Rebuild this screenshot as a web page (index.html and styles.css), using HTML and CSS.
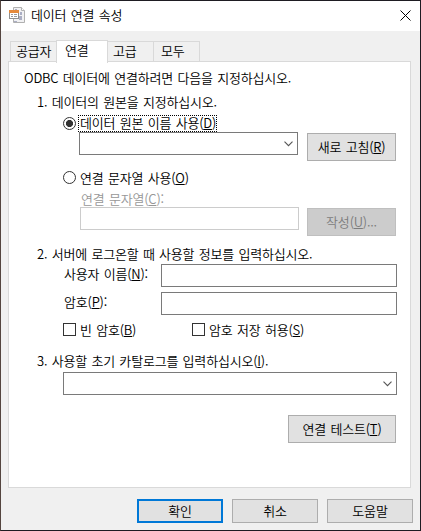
FILE: index.html
```html
<!DOCTYPE html>
<html lang="ko">
<head>
    <meta charset="UTF-8">
    <meta name="viewport" content="width=device-width, initial-scale=1.0">
    <title>데이터 연결 속성</title>
    <link rel="stylesheet" href="styles.css">
</head>
<body>
<div class="window">
    <div class="titlebar">
        <svg class="app-icon" width="17" height="17" viewBox="0 0 17 17">
            <path d="M4.5 .5h8l3 3v12h-11z" fill="#f1f1f3" stroke="#b0b0b0"/>
            <path d="M12.5 .5v3h3" fill="#fff" stroke="#b0b0b0"/>
            <path d="M6 2h2v2h-2zM9 3h1v1h-1zM11 5h2v3h-2zM10 9h3v4h-3zM5 14h3v1h-3z" fill="#aaaec4"/>
            <rect x=".5" y="3.5" width="9" height="8" fill="#fff" stroke="#8f8f8f"/>
            <rect x="0" y="3" width="10" height="3" fill="#e58a3c"/>
            <path d="M2 7.5h2M5 7.5h3M2 9.5h2M5 9.5h3" stroke="#9a9aa0"/>
        </svg>
        <span class="title">데이터 연결 속성</span>
        <svg class="close" width="11" height="11" viewBox="0 0 11 11">
            <path d="M.5 .5l10 10M10.5 .5l-10 10" stroke="#000" fill="none"/>
        </svg>
    </div>

    <div class="tabs">
        <div class="tab first">공급자</div>
        <div class="tab active">연결</div>
        <div class="tab">고급</div>
        <div class="tab last">모두</div>
    </div>

    <div class="panel">
        <div class="line intro">ODBC 데이터에 연결하려면 다음을 지정하십시오.</div>
        <div class="line step">1. 데이터의 원본을 지정하십시오.</div>

        <div class="source">
            <div class="source-left">
                <label class="option"><span class="radio checked"></span><span class="focus">데이터 원본 이름 사용(<u>D</u>)</span></label>
                <div class="box combo">
                    <svg class="arrow" width="9" height="6" viewBox="0 0 9 6"><path d="M.5 .7l4 4 4-4" fill="none" stroke="#555" stroke-width="1.1"/></svg>
                </div>
            </div>
            <button class="btn">새로 고침(<u>R</u>)</button>
        </div>

        <label class="option second"><span class="radio"></span><span class="text">연결 문자열 사용(<u>O</u>)</span></label>
        <div class="source conn">
            <div class="source-left">
                <div class="conn-label">연결 문자열(<u>C</u>):</div>
                <div class="box disabled"></div>
            </div>
            <button class="btn" disabled>작성(<u>U</u>)...</button>
        </div>

        <div class="line step two">2. 서버에 로그온할 때 사용할 정보를 입력하십시오.</div>
        <div class="field">
            <label>사용자 이름(<u>N</u>):</label>
            <div class="box"></div>
        </div>
        <div class="field password">
            <label>암호(<u>P</u>):</label>
            <div class="box"></div>
        </div>
        <div class="checks">
            <label><span class="checkbox"></span>빈 암호(<u>B</u>)</label>
            <label><span class="checkbox"></span>암호 저장 허용(<u>S</u>)</label>
        </div>

        <div class="line step three">3. 사용할 초기 카탈로그를 입력하십시오(<u>I</u>).</div>
        <div class="box combo catalog">
            <svg class="arrow" width="9" height="6" viewBox="0 0 9 6"><path d="M.5 .7l4 4 4-4" fill="none" stroke="#555" stroke-width="1.1"/></svg>
        </div>
        <button class="btn test">연결 테스트(<u>T</u>)</button>
    </div>

    <div class="footer">
        <button class="btn default">확인</button>
        <button class="btn">취소</button>
        <button class="btn">도움말</button>
    </div>
</div>
</body>
</html>
```

FILE: styles.css
```css
* {
    box-sizing: border-box;
}
body {
    margin: 0;
    font-family: "Noto Sans CJK KR", sans-serif;
    font-size: 13px;
    font-weight: 350;
    line-height: 18px;
    letter-spacing: -0.2px;
    word-spacing: 1px;
    color: #000;
    overflow: hidden;
}
.window {
    width: 421px;
    height: 531px;
    background: #f0f0f0;
    border: 1px solid #1e1c22;
    border-left-color: #54453f;
    white-space: nowrap;
}
u {
    text-underline-offset: 1px;
    text-decoration-thickness: 1px;
}

/* title bar */
.titlebar {
    display: flex;
    align-items: center;
    height: 30px;
    padding: 0 9px 2px 8px;
    background: #fff;
}
.title {
    margin-left: 5px;
    flex: 1;
}

/* tabs */
.tabs {
    display: flex;
    align-items: flex-end;
    height: 31px;
    padding-left: 9px;
    position: relative;
}
.tab {
    width: 46px;
    height: 21px;
    border: 1px solid #d9d9d9;
    border-left: none;
    padding-left: 5px;
    line-height: 18px;
}
.tab.first {
    border-left: 1px solid #d9d9d9;
    border-right: none;
}
.tab.last {
    padding-left: 7px;
}
.tab.active {
    width: 52px;
    height: 23px;
    margin-bottom: -1px;
    padding-left: 8px;
    line-height: 17px;
    background: #fff;
    border-left: 1px solid #d9d9d9;
    border-bottom: none;
}

.panel {
    width: 403px;
    height: 427px;
    margin-left: 7px;
    padding-top: 7px;
    background: #fff;
    border: 1px solid #d9d9d9;
}
.tabs + .panel {
    margin-top: -1px;
}
.line {
    height: 18px;
}
.intro {
    padding-left: 15px;
}
.step {
    margin-top: 6px;
    padding-left: 28px;
}

/* data source */
.source {
    display: flex;
    align-items: flex-end;
    height: 46px;
    margin-top: 4px;
    padding-left: 54px;
}
.source-left {
    width: 235px;
    height: 46px;
    margin-right: 9px;
}
.option {
    display: flex;
    align-items: center;
    height: 17px;
}
.radio {
    width: 13px;
    height: 13px;
    border: 1px solid #333;
    border-radius: 50%;
    background: #fff;
}
.radio.checked {
    background: radial-gradient(circle, #333 3.2px, #fff 3.9px);
}
.focus {
    width: 139px;
    height: 17px;
    margin-left: 2px;
    padding-left: 1px;
    border: 1px dotted #000;
    line-height: 14px;
}
.option .text {
    margin-left: 4px;
}
.option.second {
    margin-top: 8px;
    padding-left: 54px;
}
.box {
    width: 219px;
    height: 23px;
    background: #fff;
    border: 1px solid #7a7a7a;
}
.source .box {
    margin-left: 16px;
}
.combo {
    display: flex;
    align-items: center;
    justify-content: flex-end;
    padding-right: 4px;
}
.source.conn .box {
    margin-left: 17px;
}
.box.disabled {
    border-color: #ccc;
}
.conn-label {
    height: 17px;
    padding-left: 18px;
    line-height: 17px;
    color: #979797;
}

/* buttons */
.btn {
    width: 89px;
    height: 28px;
    padding: 0;
    font: inherit;
    letter-spacing: inherit;
    word-spacing: inherit;
    color: #000;
    background: #e1e1e1;
    border: 1px solid #adadad;
}
.btn:disabled {
    color: #7c7c7c;
    background: #ccc;
    border-color: #bfbfbf;
}

/* login */
.step.two {
    margin-top: 9px;
}
.field {
    display: flex;
    align-items: center;
    margin-top: 1px;
    padding-left: 54px;
}
.field label {
    width: 98px;
    height: 21px;
    padding-left: 1px;
}
.field .box {
    width: 236px;
}
.password {
    margin-top: 5px;
}
.checks {
    display: flex;
    height: 13px;
    margin-top: 8px;
    padding-left: 54px;
}
.checks label {
    display: flex;
    align-items: center;
    width: 129px;
}
.checkbox {
    width: 13px;
    height: 13px;
    margin-right: 4px;
    border: 1px solid #333;
}

/* catalog */
.step.three {
    margin-top: 16px;
}
.catalog {
    width: 334px;
    margin: 2px 0 0 54px;
}
.test {
    display: block;
    width: 108px;
    margin: 20px 0 0 279px;
}

.footer {
    display: flex;
    justify-content: flex-end;
    gap: 9px;
    margin-top: 11px;
    padding-right: 7px;
}
.footer .btn {
    width: 86px;
    height: 24px;
}
.footer .default {
    border: 2px solid #0078d7;
}
```
